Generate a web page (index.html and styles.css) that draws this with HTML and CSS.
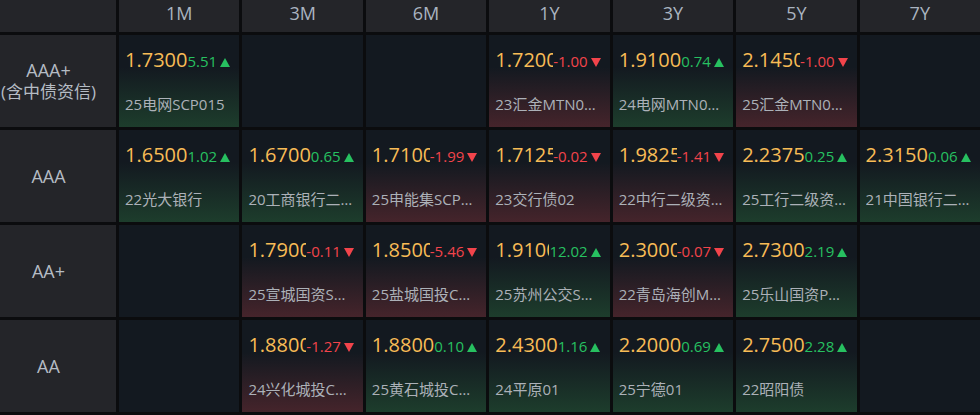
FILE: index.html
```html
<!DOCTYPE html>
<html lang="zh">
<head>
<meta charset="utf-8">
<link rel="stylesheet" href="styles.css">
</head>
<body>
<div class="board">
  <div class="corner"></div>
  <div class="head">1M</div>
  <div class="head">3M</div>
  <div class="head">6M</div>
  <div class="head">1Y</div>
  <div class="head">3Y</div>
  <div class="head">5Y</div>
  <div class="head">7Y</div>

  <div class="label"><span>AAA+</span><span class="sub">(含中债资信)</span></div>
  <div class="cell up"><div class="top"><span class="rate">1.7300</span><span class="chg">5.51</span><svg class="tri" viewBox="0 0 10 9"><polygon points="5,0 10,9 0,9"/></svg></div><div class="name">25电网SCP015</div></div>
  <div class="cell"></div>
  <div class="cell"></div>
  <div class="cell down"><div class="top"><span class="rate">1.7200</span><span class="chg">-1.00</span><svg class="tri" viewBox="0 0 10 9"><polygon points="0,0 10,0 5,9"/></svg></div><div class="name">23汇金MTN001</div></div>
  <div class="cell up"><div class="top"><span class="rate">1.9100</span><span class="chg">0.74</span><svg class="tri" viewBox="0 0 10 9"><polygon points="5,0 10,9 0,9"/></svg></div><div class="name">24电网MTN001</div></div>
  <div class="cell down"><div class="top"><span class="rate">2.1450</span><span class="chg">-1.00</span><svg class="tri" viewBox="0 0 10 9"><polygon points="0,0 10,0 5,9"/></svg></div><div class="name">25汇金MTN002</div></div>
  <div class="cell"></div>

  <div class="label"><span>AAA</span></div>
  <div class="cell up"><div class="top"><span class="rate">1.6500</span><span class="chg">1.02</span><svg class="tri" viewBox="0 0 10 9"><polygon points="5,0 10,9 0,9"/></svg></div><div class="name">22光大银行</div></div>
  <div class="cell up"><div class="top"><span class="rate">1.6700</span><span class="chg">0.65</span><svg class="tri" viewBox="0 0 10 9"><polygon points="5,0 10,9 0,9"/></svg></div><div class="name">20工商银行二级01</div></div>
  <div class="cell down"><div class="top"><span class="rate">1.7100</span><span class="chg">-1.99</span><svg class="tri" viewBox="0 0 10 9"><polygon points="0,0 10,0 5,9"/></svg></div><div class="name">25申能集SCP003</div></div>
  <div class="cell down"><div class="top"><span class="rate">1.7125</span><span class="chg">-0.02</span><svg class="tri" viewBox="0 0 10 9"><polygon points="0,0 10,0 5,9"/></svg></div><div class="name">23交行债02</div></div>
  <div class="cell down"><div class="top"><span class="rate">1.9825</span><span class="chg">-1.41</span><svg class="tri" viewBox="0 0 10 9"><polygon points="0,0 10,0 5,9"/></svg></div><div class="name">22中行二级资本债01</div></div>
  <div class="cell up"><div class="top"><span class="rate">2.2375</span><span class="chg">0.25</span><svg class="tri" viewBox="0 0 10 9"><polygon points="5,0 10,9 0,9"/></svg></div><div class="name">25工行二级资本债01</div></div>
  <div class="cell up"><div class="top"><span class="rate">2.3150</span><span class="chg">0.06</span><svg class="tri" viewBox="0 0 10 9"><polygon points="5,0 10,9 0,9"/></svg></div><div class="name">21中国银行二级01</div></div>

  <div class="label"><span>AA+</span></div>
  <div class="cell"></div>
  <div class="cell down"><div class="top"><span class="rate">1.7900</span><span class="chg">-0.11</span><svg class="tri" viewBox="0 0 10 9"><polygon points="0,0 10,0 5,9"/></svg></div><div class="name">25宣城国资SCP001</div></div>
  <div class="cell down"><div class="top"><span class="rate">1.8500</span><span class="chg">-5.46</span><svg class="tri" viewBox="0 0 10 9"><polygon points="0,0 10,0 5,9"/></svg></div><div class="name">25盐城国投CP001</div></div>
  <div class="cell up"><div class="top"><span class="rate">1.9100</span><span class="chg">12.02</span><svg class="tri" viewBox="0 0 10 9"><polygon points="5,0 10,9 0,9"/></svg></div><div class="name">25苏州公交SCP001</div></div>
  <div class="cell down"><div class="top"><span class="rate">2.3000</span><span class="chg">-0.07</span><svg class="tri" viewBox="0 0 10 9"><polygon points="0,0 10,0 5,9"/></svg></div><div class="name">22青岛海创MTN001</div></div>
  <div class="cell up"><div class="top"><span class="rate">2.7300</span><span class="chg">2.19</span><svg class="tri" viewBox="0 0 10 9"><polygon points="5,0 10,9 0,9"/></svg></div><div class="name">25乐山国资PPN001</div></div>
  <div class="cell"></div>

  <div class="label"><span>AA</span></div>
  <div class="cell"></div>
  <div class="cell down"><div class="top"><span class="rate">1.8800</span><span class="chg">-1.27</span><svg class="tri" viewBox="0 0 10 9"><polygon points="0,0 10,0 5,9"/></svg></div><div class="name">24兴化城投CP001</div></div>
  <div class="cell up"><div class="top"><span class="rate">1.8800</span><span class="chg">0.10</span><svg class="tri" viewBox="0 0 10 9"><polygon points="5,0 10,9 0,9"/></svg></div><div class="name">25黄石城投CP001</div></div>
  <div class="cell up"><div class="top"><span class="rate">2.4300</span><span class="chg">1.16</span><svg class="tri" viewBox="0 0 10 9"><polygon points="5,0 10,9 0,9"/></svg></div><div class="name">24平原01</div></div>
  <div class="cell up"><div class="top"><span class="rate">2.2000</span><span class="chg">0.69</span><svg class="tri" viewBox="0 0 10 9"><polygon points="5,0 10,9 0,9"/></svg></div><div class="name">25宁德01</div></div>
  <div class="cell up"><div class="top"><span class="rate">2.7500</span><span class="chg">2.28</span><svg class="tri" viewBox="0 0 10 9"><polygon points="5,0 10,9 0,9"/></svg></div><div class="name">22昭阳债</div></div>
  <div class="cell"></div>
</div>
</body>
</html>
```

FILE: styles.css
```css
html, body {
  margin: 0;
  padding: 0;
  background: #0b0c0e;
}

body {
  width: 980px;
  height: 415px;
  overflow: hidden;
  font-family: "Open Sans", "Noto Sans CJK SC", sans-serif;
}

.board {
  display: grid;
  grid-template-columns: 116px repeat(7, minmax(0, 1fr));
  grid-template-rows: 32px repeat(4, 92px);
  gap: 3px;
  padding-bottom: 3px;
  background: #0b0c0e;
}

.corner,
.head,
.label {
  background: #242529;
}

.head {
  display: flex;
  align-items: center;
  justify-content: center;
  padding-bottom: 6px;
  color: #aab4c0;
  font-size: 18px;
  line-height: 20px;
}

.label {
  display: flex;
  flex-direction: column;
  align-items: center;
  justify-content: center;
  text-align: center;
  padding-right: 19px;
  color: #b5bcc4;
  font-size: 18px;
  line-height: 21px;
}

.label .sub {
  font-size: 17px;
  white-space: nowrap;
}

.cell {
  display: flex;
  flex-direction: column;
  min-width: 0;
  padding: 13px 9px 0 6px;
  background: #131920;
}

.cell.up {
  background: linear-gradient(to bottom, #131920 35%, #1d3d2c 100%);
}

.cell.down {
  background: linear-gradient(to bottom, #131920 35%, #45242b 100%);
}

.top {
  display: flex;
  align-items: baseline;
  height: 24px;
  line-height: 24px;
  white-space: nowrap;
}

.rate {
  flex: 0 1 auto;
  min-width: 0;
  overflow: hidden;
  color: #f8bc56;
  font-size: 20px;
}

.chg {
  flex: none;
  font-size: 15px;
}

.tri {
  flex: none;
  width: 10px;
  height: 9px;
  margin-left: 3px;
}

.up .chg { color: #27c060; }
.up .tri { fill: #27c060; }
.down .chg { color: #f2444b; }
.down .tri { fill: #f2444b; }

.name {
  margin-top: 22px;
  color: #acb1b8;
  font-size: 15px;
  line-height: 20px;
  white-space: nowrap;
  overflow: hidden;
  text-overflow: ellipsis;
}
```
